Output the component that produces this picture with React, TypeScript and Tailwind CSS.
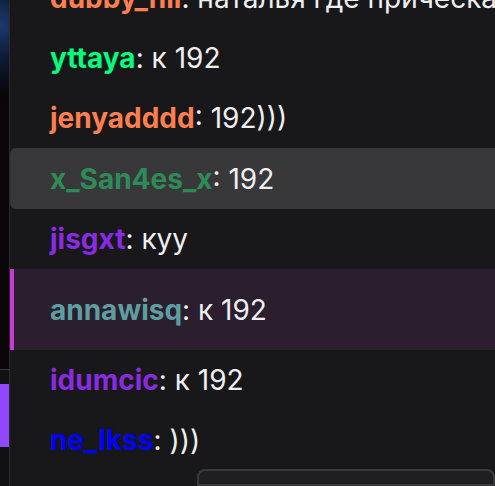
import React from "react";

type Msg = {
  user: string;
  color: string;
  text: string;
  kind?: "hover" | "highlight";
};

const messages: Msg[] = [
  { user: "dubby_nil", color: "text-[#ff7f50]", text: "наталья где прическа" },
  { user: "yttaya", color: "text-[#00ff7f]", text: "к 192" },
  { user: "jenyadddd", color: "text-[#ff7f50]", text: "192)))" },
  { user: "x_San4es_x", color: "text-[#2e8b57]", text: "192", kind: "hover" },
  { user: "jisgxt", color: "text-[#8a2be2]", text: "куу" },
  { user: "annawisq", color: "text-[#5f9ea0]", text: "к 192", kind: "highlight" },
  { user: "idumcic", color: "text-[#8a2be2]", text: "к 192" },
  { user: "ne_lkss", color: "text-[#0000ff]", text: ")))" },
];

function Row({ m }: { m: Msg }) {
  if (m.kind === "hover") {
    return (
      <div className="flex h-[61px] items-center rounded-l-md bg-[#38383b] pl-10">
        <Line m={m} />
      </div>
    );
  }
  if (m.kind === "highlight") {
    return (
      <div className="flex h-[81px] items-center border-l-4 border-[#c83ad6] bg-[#2a1e2f] pl-9">
        <Line m={m} />
      </div>
    );
  }
  return (
    <div className="flex h-[60px] items-center pl-10">
      <Line m={m} />
    </div>
  );
}

function Line({ m }: { m: Msg }) {
  return (
    <p className="whitespace-nowrap text-[28px] leading-[32px] text-[#efeff1]">
      <span className={`font-bold ${m.color}`}>{m.user}</span>: {m.text}
    </p>
  );
}

export default function App() {
  return (
    <div
      className="flex h-[486px] w-[495px] overflow-hidden bg-[#18181b]"
      style={{ fontFamily: "Inter, 'Noto Sans', sans-serif" }}
    >
      {/* left strip, edge of the video */}
      <div className="flex w-[9px] shrink-0 flex-col bg-[#0b0708]">
        <div className="h-[100px] bg-[radial-gradient(circle_at_0%_25%,#1c3a6e_0%,#0d1a33_45%,#07070a_90%)]" />
        <div className="h-[269px]" />
        <div className="h-px bg-[#3a3a3d]" />
        <div className="h-[14px] bg-[#111113]" />
        <div className="h-[63px] bg-[#9147ff]" />
        <div className="flex-1 bg-[#111113]" />
      </div>
      <div className="w-px shrink-0 bg-[#2a2a2d]" />

      {/* chat */}
      <div className="flex min-w-0 flex-1 flex-col">
        <div className="-mt-[32px] flex flex-col">
          <div className="flex h-[60px] items-center pl-10">
            <Line m={messages[0]} />
          </div>
          {messages.slice(1).map((m) => (
            <Row key={m.user} m={m} />
          ))}
        </div>
        <div className="ml-[187px] mt-[-1px] h-[30px] rounded-t-lg border-2 border-[#3a3a3d] bg-[#1f1f23]" />
      </div>
    </div>
  );
}
